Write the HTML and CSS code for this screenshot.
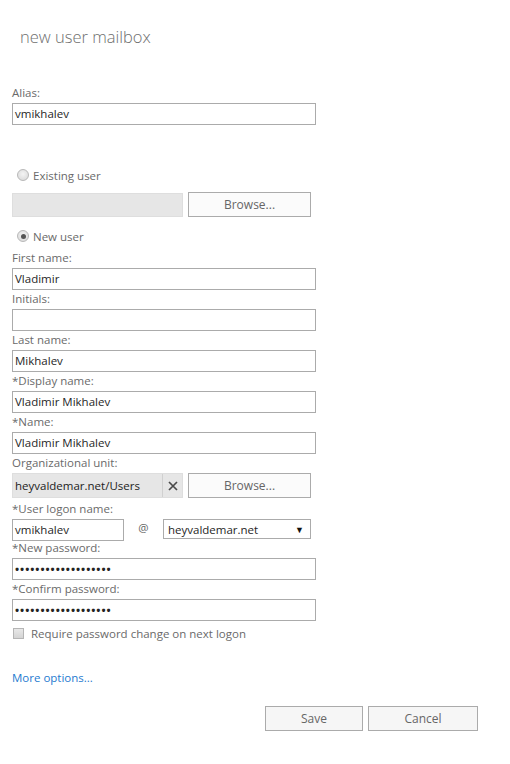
FILE: index.html
```html
<!DOCTYPE html>
<html>
<head>
<meta charset="utf-8">
<link rel="stylesheet" href="styles.css">
</head>
<body>
<div class="page">
  <h1 class="title">new user mailbox</h1>
  <div class="form">
    <div class="lbl alias-lbl">Alias:</div>
    <div class="input">vmikhalev</div>

    <div class="radio-row existing"><span class="radio"></span><span>Existing user</span></div>
    <div class="picker first-picker">
      <div class="picker-field"></div>
      <div class="btn browse">Browse...</div>
    </div>
    <div class="radio-row newuser"><span class="radio checked"></span><span>New user</span></div>

    <div class="lbl first-lbl">First name:</div>
    <div class="input">Vladimir</div>
    <div class="lbl">Initials:</div>
    <div class="input"></div>
    <div class="lbl">Last name:</div>
    <div class="input">Mikhalev</div>
    <div class="lbl">*Display name:</div>
    <div class="input">Vladimir Mikhalev</div>
    <div class="lbl">*Name:</div>
    <div class="input">Vladimir Mikhalev</div>
    <div class="lbl">Organizational unit:</div>
    <div class="picker org-picker">
      <div class="picker-field org-field">
        <span class="org-text">heyvaldemar.net/Users</span>
        <span class="clear"><svg width="10" height="10" viewBox="0 0 10 10"><path d="M1 1 L9 9 M9 1 L1 9" stroke="#4a4a4a" stroke-width="1.7" fill="none"/></svg></span>
      </div>
      <div class="btn browse">Browse...</div>
    </div>
    <div class="lbl logon-lbl">*User logon name:</div>
    <div class="logon-row">
      <div class="input logon-input">vmikhalev</div>
      <span class="at">@</span>
      <div class="select"><span>heyvaldemar.net</span><span class="arrow">▼</span></div>
    </div>
    <div class="lbl">*New password:</div>
    <div class="input pwd">•••••••••••••••••••</div>
    <div class="lbl">*Confirm password:</div>
    <div class="input pwd">•••••••••••••••••••</div>
    <div class="check-row"><span class="checkbox"></span><span>Require password change on next logon</span></div>

    <a class="more" href="#">More options...</a>

    <div class="actions">
      <div class="btn save">Save</div>
      <div class="btn cancel">Cancel</div>
    </div>
  </div>
</div>
</body>
</html>
```
FILE: styles.css
```css
html, body {
  margin: 0;
  padding: 0;
  background: #ffffff;
}
.page {
  padding: 0 0 0 12px;
  font-family: "Open Sans", "Noto Sans", sans-serif;
  font-size: 11.5px;
  color: #6a6a6a;
}
.title {
  margin: 0;
  padding: 26px 0 0 8px;
  font-weight: 300;
  font-size: 16.5px;
  line-height: 22px;
  color: #6e6e6e;
}
.lbl {
  height: 16px;
  line-height: 16px;
  margin-top: 1px;
  white-space: nowrap;
}
.alias-lbl { margin-top: 37px; }
.first-lbl { margin-top: 6px; }
.logon-lbl { margin-top: 3px; }
.input {
  box-sizing: border-box;
  width: 304px;
  height: 22px;
  margin-top: 2px;
  border: 1px solid #ababab;
  padding: 0 2px;
  line-height: 20px;
  color: #262626;
  background: #fff;
  white-space: nowrap;
  overflow: hidden;
}
.pwd {
  font-size: 11px;
  font-weight: 700;
  letter-spacing: 0.95px;
  color: #222;
}
.radio-row {
  display: flex;
  align-items: center;
  height: 16px;
  gap: 4px;
  padding-left: 5px;
}
.existing { margin-top: 42px; }
.newuser { margin-top: 11px; }
.radio {
  box-sizing: border-box;
  width: 12px;
  height: 12px;
  border-radius: 50%;
  border: 1px solid #b8b8b8;
  background: radial-gradient(circle at 50% 40%, #f4f4f4, #d6d6d6);
  display: flex;
  align-items: center;
  justify-content: center;
}
.radio.checked::after {
  content: "";
  width: 5px;
  height: 5px;
  border-radius: 50%;
  background: #555;
}
.picker {
  display: flex;
  gap: 5px;
  height: 25px;
}
.first-picker { margin-top: 9px; }
.org-picker { margin-top: 2px; }
.picker-field {
  box-sizing: border-box;
  width: 171px;
  height: 24px;
  margin-top: 1px;
  background: #e6e6e6;
  border: 1px solid #dedede;
}
.org-field {
  display: flex;
  align-items: center;
  margin-top: 0;
  height: 25px;
  color: #222;
}
.org-text {
  flex: 1;
  padding-left: 2px;
  border-right: 1px solid #d0d0d0;
  height: 100%;
  line-height: 24px;
}
.clear {
  width: 19px;
  display: flex;
  align-items: center;
  justify-content: center;
}
.btn {
  box-sizing: border-box;
  height: 25px;
  border: 1px solid #ababab;
  background: #fbfbfb;
  color: #666;
  text-align: center;
  line-height: 23px;
  font-size: 12px;
}
.browse { width: 123px; }
.logon-row {
  display: flex;
  align-items: flex-start;
  height: 22px;
}
.logon-input { width: 112px; }
.at {
  width: 39px;
  text-align: center;
  line-height: 20px;
  margin-top: 1px;
  color: #666;
}
.select {
  box-sizing: border-box;
  width: 148px;
  height: 20px;
  margin-top: 2px;
  border: 1px solid #ababab;
  display: flex;
  align-items: center;
  justify-content: space-between;
  padding: 0 6px 0 4px;
  color: #262626;
}
.arrow {
  font-size: 9px;
  color: #111;
}
.check-row {
  display: flex;
  align-items: center;
  height: 16px;
  margin-top: 4px;
  gap: 7px;
  padding-left: 1px;
}
.checkbox {
  box-sizing: border-box;
  width: 11px;
  height: 11px;
  border: 1px solid #b5b5b5;
  background: linear-gradient(#e8e8e8, #d4d4d4);
}
.more {
  display: block;
  width: max-content;
  margin-top: 29px;
  line-height: 16px;
  color: #1f7bcf;
  text-decoration: none;
}
.actions {
  display: flex;
  justify-content: flex-end;
  gap: 5px;
  margin-top: 20px;
  margin-right: 32px;
}
.save { width: 98px; background: #f6f6f6; }
.cancel { width: 110px; background: #f6f6f6; }
```
